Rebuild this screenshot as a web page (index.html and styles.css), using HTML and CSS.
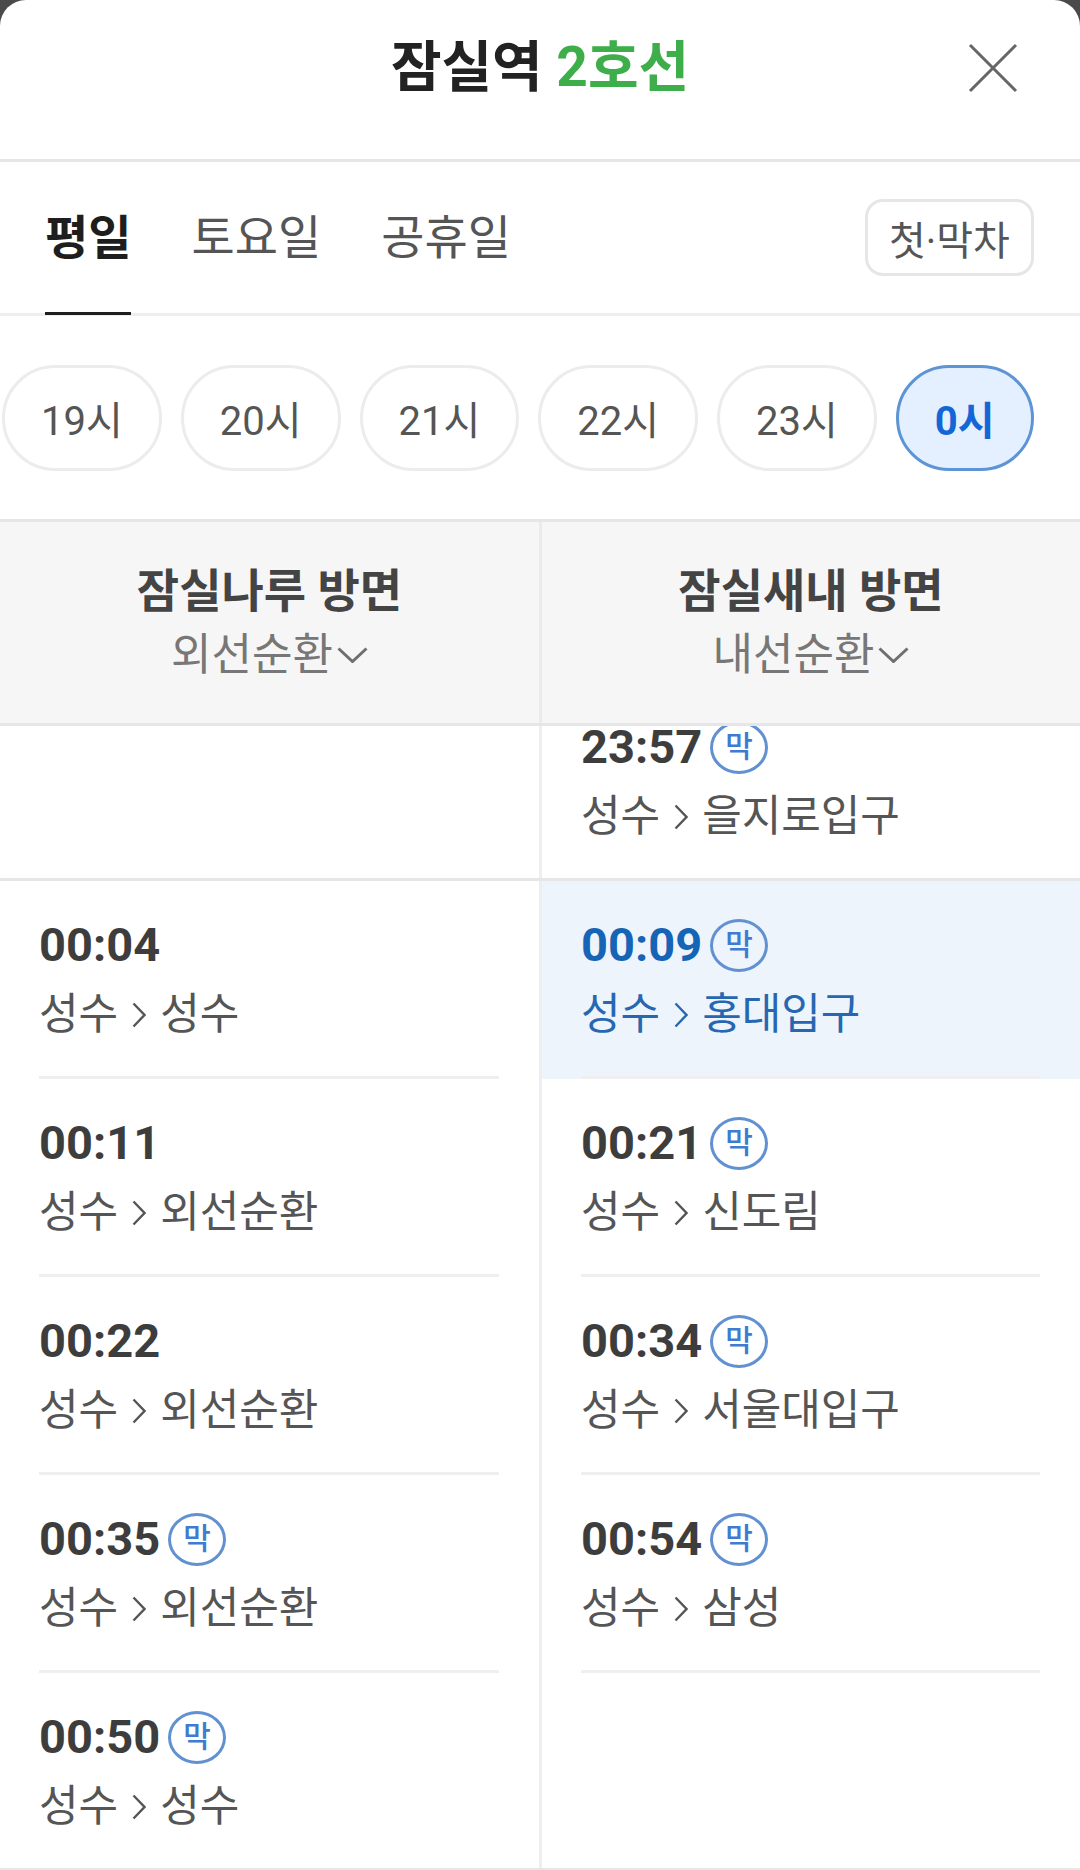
FILE: index.html
```html
<!DOCTYPE html>
<html lang="ko">
<head>
<meta charset="utf-8">
<title>잠실역 2호선 시간표</title>
<link rel="stylesheet" href="styles.css">
</head>
<body>
<div class="sheet">
  <header class="topbar">
    <h1 class="title">잠실역 <span class="line-name">2호선</span></h1>
    <button class="close" aria-label="닫기">
      <svg width="50" height="50" viewBox="0 0 50 50"><path d="M2 2 L48 48 M48 2 L2 48" stroke="#666" stroke-width="3" fill="none"/></svg>
    </button>
  </header>

  <nav class="tabs">
    <span class="tab tab--active">평일</span>
    <span class="tab">토요일</span>
    <span class="tab">공휴일</span>
    <button class="firstlast">첫·막차</button>
  </nav>

  <div class="hours">
    <span class="hour">19시</span>
    <span class="hour">20시</span>
    <span class="hour">21시</span>
    <span class="hour">22시</span>
    <span class="hour">23시</span>
    <span class="hour hour--active">0시</span>
  </div>

  <div class="dirs">
    <div class="dir">
      <div class="dir-name">잠실나루 방면</div>
      <div class="dir-sub">외선순환<svg class="caret" width="31" height="16" viewBox="0 0 31 16"><polyline points="1.5,1.5 15.5,14.5 29.5,1.5" fill="none" stroke="#6f6f6f" stroke-width="3"/></svg></div>
    </div>
    <div class="dir">
      <div class="dir-name">잠실새내 방면</div>
      <div class="dir-sub">내선순환<svg class="caret" width="31" height="16" viewBox="0 0 31 16"><polyline points="1.5,1.5 15.5,14.5 29.5,1.5" fill="none" stroke="#6f6f6f" stroke-width="3"/></svg></div>
    </div>
  </div>

  <div class="list">
    <div class="group group--scrolled">
      <div class="col"></div>
      <div class="col">
        <div class="row row--last">
          <div class="row-body">
            <div class="time-line"><span class="time">23:57</span><span class="badge">막</span></div>
            <div class="route">성수<svg class="arrow" width="14" height="26" viewBox="0 0 14 26"><polyline points="1.5,1.5 12.5,13 1.5,24.5" fill="none" stroke="currentColor" stroke-width="2.4"/></svg>을지로입구</div>
          </div>
        </div>
      </div>
    </div>

    <div class="group">
      <div class="col">
        <div class="row">
          <div class="row-body">
            <div class="time-line"><span class="time">00:04</span></div>
            <div class="route">성수<svg class="arrow" width="14" height="26" viewBox="0 0 14 26"><polyline points="1.5,1.5 12.5,13 1.5,24.5" fill="none" stroke="currentColor" stroke-width="2.4"/></svg>성수</div>
          </div>
        </div>
        <div class="row">
          <div class="row-body">
            <div class="time-line"><span class="time">00:11</span></div>
            <div class="route">성수<svg class="arrow" width="14" height="26" viewBox="0 0 14 26"><polyline points="1.5,1.5 12.5,13 1.5,24.5" fill="none" stroke="currentColor" stroke-width="2.4"/></svg>외선순환</div>
          </div>
        </div>
        <div class="row">
          <div class="row-body">
            <div class="time-line"><span class="time">00:22</span></div>
            <div class="route">성수<svg class="arrow" width="14" height="26" viewBox="0 0 14 26"><polyline points="1.5,1.5 12.5,13 1.5,24.5" fill="none" stroke="currentColor" stroke-width="2.4"/></svg>외선순환</div>
          </div>
        </div>
        <div class="row">
          <div class="row-body">
            <div class="time-line"><span class="time">00:35</span><span class="badge">막</span></div>
            <div class="route">성수<svg class="arrow" width="14" height="26" viewBox="0 0 14 26"><polyline points="1.5,1.5 12.5,13 1.5,24.5" fill="none" stroke="currentColor" stroke-width="2.4"/></svg>외선순환</div>
          </div>
        </div>
        <div class="row row--last">
          <div class="row-body">
            <div class="time-line"><span class="time">00:50</span><span class="badge">막</span></div>
            <div class="route">성수<svg class="arrow" width="14" height="26" viewBox="0 0 14 26"><polyline points="1.5,1.5 12.5,13 1.5,24.5" fill="none" stroke="currentColor" stroke-width="2.4"/></svg>성수</div>
          </div>
        </div>
      </div>

      <div class="col">
        <div class="row row--hl">
          <div class="row-body">
            <div class="time-line"><span class="time">00:09</span><span class="badge">막</span></div>
            <div class="route">성수<svg class="arrow" width="14" height="26" viewBox="0 0 14 26"><polyline points="1.5,1.5 12.5,13 1.5,24.5" fill="none" stroke="currentColor" stroke-width="2.4"/></svg>홍대입구</div>
          </div>
        </div>
        <div class="row">
          <div class="row-body">
            <div class="time-line"><span class="time">00:21</span><span class="badge">막</span></div>
            <div class="route">성수<svg class="arrow" width="14" height="26" viewBox="0 0 14 26"><polyline points="1.5,1.5 12.5,13 1.5,24.5" fill="none" stroke="currentColor" stroke-width="2.4"/></svg>신도림</div>
          </div>
        </div>
        <div class="row">
          <div class="row-body">
            <div class="time-line"><span class="time">00:34</span><span class="badge">막</span></div>
            <div class="route">성수<svg class="arrow" width="14" height="26" viewBox="0 0 14 26"><polyline points="1.5,1.5 12.5,13 1.5,24.5" fill="none" stroke="currentColor" stroke-width="2.4"/></svg>서울대입구</div>
          </div>
        </div>
        <div class="row">
          <div class="row-body">
            <div class="time-line"><span class="time">00:54</span><span class="badge">막</span></div>
            <div class="route">성수<svg class="arrow" width="14" height="26" viewBox="0 0 14 26"><polyline points="1.5,1.5 12.5,13 1.5,24.5" fill="none" stroke="currentColor" stroke-width="2.4"/></svg>삼성</div>
          </div>
        </div>
      </div>
    </div>
  </div>
</div>
</body>
</html>
```

FILE: styles.css
```css
* { box-sizing: border-box; }

html, body {
  margin: 0;
  padding: 0;
}

body {
  width: 1080px;
  height: 1870px;
  overflow: hidden;
  background: #4a4a4a;
  font-family: Roboto, "Noto Sans CJK KR", sans-serif;
}

.sheet {
  height: 1870px;
  background: #fff;
  border-radius: 26px 26px 0 0;
  overflow: hidden;
}

/* ---------- top bar ---------- */
.topbar {
  position: relative;
  height: 162px;
  border-bottom: 3px solid #e6e6e6;
  display: flex;
  justify-content: center;
  align-items: flex-start;
  padding-top: 35px;
}

.title {
  margin: 0;
  font-size: 55px;
  line-height: 64px;
  font-weight: 700;
  color: #222;
}

.line-name { color: #3dae4a; }

.close {
  position: absolute;
  top: 43px;
  right: 62px;
  width: 50px;
  height: 50px;
  padding: 0;
  border: 0;
  background: none;
}
.close svg { display: block; }

/* ---------- tabs ---------- */
.tabs {
  height: 154px;
  border-bottom: 3px solid #eeeeee;
  display: flex;
  align-items: stretch;
  gap: 60px;
  padding: 0 46px 0 45px;
}

.tab {
  position: relative;
  display: flex;
  align-items: center;
  font-size: 47px;
  line-height: 54px;
  color: #555;
}

.tab--active {
  font-weight: 700;
  color: #1e1e1e;
}

.tab--active::after {
  content: "";
  position: absolute;
  left: 0;
  right: 0;
  bottom: -2px;
  height: 3px;
  background: #1e1e1e;
}

.firstlast {
  margin-left: auto;
  align-self: center;
  width: 169px;
  height: 77px;
  padding: 0;
  border: 3px solid #e6e6e6;
  border-radius: 18px;
  background: #fff;
  font-family: inherit;
  font-size: 40px;
  color: #555;
}

/* ---------- hour pills ---------- */
.hours {
  height: 203px;
  display: flex;
  align-items: center;
  gap: 19px;
  padding-left: 2px;
  overflow: hidden;
}

.hour {
  flex: none;
  height: 106px;
  padding: 0 36px;
  border: 3px solid #ececec;
  border-radius: 53px;
  display: flex;
  align-items: center;
  font-size: 40px;
  color: #555;
  background: #fff;
}

.hour--active {
  border-color: #5d94d6;
  background: #e4f0ff;
  color: #1466d6;
  font-weight: 700;
}

/* ---------- direction header ---------- */
.dirs {
  height: 207px;
  display: grid;
  grid-template-columns: 539px 538px;
  column-gap: 3px;
  background: #ebebeb;
  border-top: 3px solid #e6e6e6;
  border-bottom: 3px solid #e6e6e6;
}

.dir {
  background: #f6f6f6;
  display: flex;
  flex-direction: column;
  align-items: center;
  justify-content: center;
}

.dir-name {
  font-size: 46px;
  line-height: 64px;
  font-weight: 700;
  color: #444;
}

.dir-sub {
  display: flex;
  align-items: center;
  gap: 4px;
  font-size: 44px;
  line-height: 64px;
  color: #777;
}

.caret { display: block; }

/* ---------- list ---------- */
.list {
  height: 1144px;
  overflow: hidden;
}

.group {
  display: grid;
  grid-template-columns: 539px 538px;
  column-gap: 3px;
  background: #eeeeee;
  border-bottom: 3px solid #e6e6e6;
}

.group--scrolled { margin-top: -43px; }

.col { background: #fff; }

.row {
  padding: 0 40px 0 39px;
}

.row-body {
  height: 198px;
  padding-top: 36px;
  border-bottom: 3px solid #efefef;
}

.row--last .row-body {
  height: 195px;
  border-bottom: 0;
}

.time-line {
  display: flex;
  align-items: center;
  height: 56px;
}

.time {
  font-size: 47px;
  line-height: 56px;
  font-weight: 700;
  color: #3d3d3d;
}

.badge {
  margin-left: 8px;
  width: 58px;
  height: 53px;
  border: 3px solid #6191d1;
  border-radius: 50%;
  display: flex;
  align-items: center;
  justify-content: center;
  font-size: 30px;
  line-height: 1;
  font-weight: 500;
  color: #3f7cd0;
}

.route {
  margin-top: 15px;
  display: flex;
  align-items: center;
  font-size: 43px;
  line-height: 52px;
  color: #555;
}

.arrow {
  display: block;
  margin: 2px 14px 0 14px;
}

.row--hl { background: #eef4fb; }
.row--hl .time { color: #1664b5; }
.row--hl .route { color: #2767b1; }
```
